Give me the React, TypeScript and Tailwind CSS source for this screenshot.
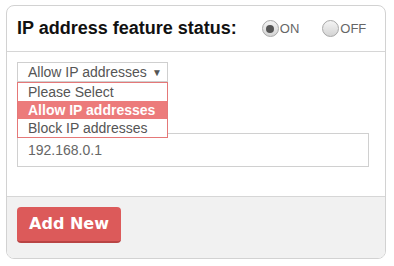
const Radio = ({ checked, label }: { checked?: boolean; label: string }) => (
  <label className="flex items-center">
    <span className="flex h-[17px] w-[17px] items-center justify-center rounded-full border border-[#a8a8a8] bg-gradient-to-b from-[#f4f4f4] to-[#d4d4d4]">
      {checked && <span className="h-[8px] w-[8px] rounded-full bg-[#555]"></span>}
    </span>
    <span className="ml-px text-[13px] text-[#666]">{label}</span>
  </label>
);

const App = () => {
  return (
    <div className="h-[266px] w-[394px] bg-white pl-[6px] pt-[5px] font-['Liberation_Sans',Arial,sans-serif]">
      <div className="w-[380px] overflow-hidden rounded-[8px] border border-[#d2d2d2] bg-white">
        <div className="flex h-[46px] items-center border-b border-[#d6d6d6] pl-[10px]">
          <h1 className="text-[18px] font-bold text-[#111]">IP address feature status:</h1>
          <div className="ml-[25px] flex gap-[23px]">
            <Radio checked label="ON" />
            <Radio label="OFF" />
          </div>
        </div>

        <div className="relative h-[144px] px-[10px] pt-[10px]">
          <div className="flex h-[20px] w-[151px] items-center justify-between border border-[#cfcfcf] pl-[10px] pr-[5px] text-[14px] text-[#555]">
            <span>Allow IP addresses</span>
            <span className="text-[10px] text-[#555]">▼</span>
          </div>
          <div className="mt-[51px] flex h-[34px] w-[352px] items-center border border-[#d0d0d0] px-[10px] text-[14px] text-[#666]">
            192.168.0.1
          </div>

          <ul className="absolute left-[10px] top-[30px] w-[151px] border border-[#e57878] bg-white text-[14px] leading-[18px]">
            <li className="pl-[10px] text-[#555]">Please Select</li>
            <li className="bg-[#ec7b7b] pl-[10px] font-bold text-white">Allow IP addresses</li>
            <li className="pl-[10px] text-[#555]">Block IP addresses</li>
          </ul>
        </div>

        <div className="h-[62px] border-t border-[#d6d6d6] bg-[#f1f1f1] px-[10px] pt-[10px]">
          <button className="flex h-[36px] w-[104px] items-center justify-center rounded-[4px] border-b-2 border-[#b94444] bg-[#dc5a5a] font-['DejaVu_Sans',Verdana,sans-serif] text-[16px] font-bold text-white">
            Add New
          </button>
        </div>
      </div>
    </div>
  );
};

export default App;
